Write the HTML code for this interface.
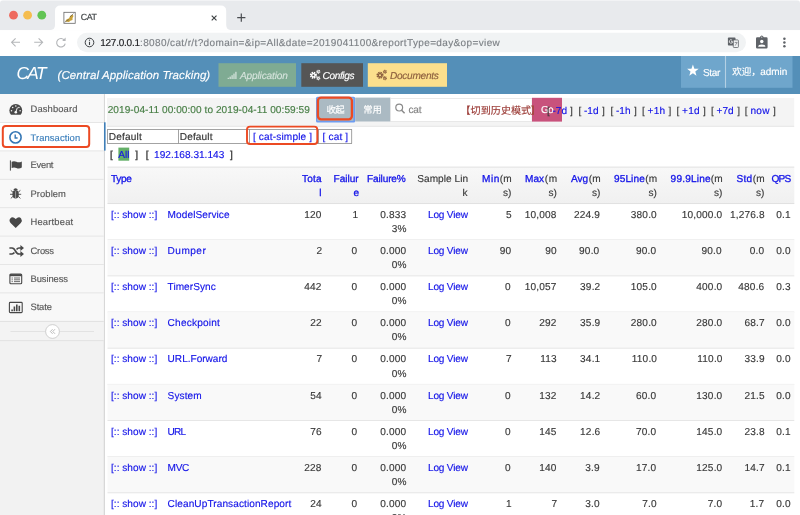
<!DOCTYPE html>
<html lang="zh">
<head>
<meta charset="utf-8">
<title>CAT</title>
<style>
html,body{margin:0;padding:0;background:#fff;}
body{width:800px;height:515px;overflow:hidden;position:relative;font-family:"Liberation Sans","Noto Sans CJK SC",sans-serif;}
#root{position:absolute;left:0;top:0;width:800px;height:515px;overflow:hidden;will-change:transform;}
#root div{position:absolute;box-sizing:border-box;}
#root svg{position:absolute;overflow:visible;}
#root span,#root a{position:absolute;white-space:pre;line-height:1;text-decoration:none;-webkit-text-stroke:0.15px currentColor;text-rendering:geometricPrecision;}
</style>
</head>
<body>
<div id="root">
<svg width="800" height="515" viewBox="0 0 800 515" style="left:0;top:0">
<rect x="0" y="0" width="800" height="30.2" fill="#e8eaed"/>
<rect x="0" y="0" width="800" height="0.9" fill="#f3f4f6"/>
<path d="M0 0 H3.5 A3.5 3.5 0 0 0 0 3.5 Z" fill="#fff"/>
<path d="M800 0 H796.5 A3.5 3.5 0 0 1 800 3.5 Z" fill="#fff"/>
<circle cx="13.5" cy="15.2" r="4.4" fill="#ee6a5f"/>
<circle cx="27.6" cy="15.2" r="4.4" fill="#f5bd4f"/>
<circle cx="41.8" cy="15.2" r="4.4" fill="#61c454"/>
<path d="M49.5 30.2 Q55 30.2 55 25 V11 Q55 5.5 60.5 5.5 H220.7 Q226.2 5.5 226.2 11 V25 Q226.2 30.2 231.7 30.2 Z" fill="#fff"/>
<rect x="0" y="30.2" width="800" height="25.8" fill="#fff"/>
<rect x="63.9" y="12.3" width="11.3" height="11" fill="#fff" stroke="#666" stroke-width="0.8"/>
<path d="M65 21.5 Q67 18 69 18.5 Q70 15 72.5 14.5 L73.5 16 Q72 18 72.5 20 Q70 20.5 69 22 Z" fill="#c9a23a"/>
<path d="M64.5 22.3 L69 19.5 M70 17 L73.5 13.5" stroke="#555" stroke-width="0.6" fill="none"/>
<path d="M211.7 15.6 L216.5 20.4 M216.5 15.6 L211.7 20.4" stroke="#3c4043" stroke-width="1.15" fill="none"/>
<path d="M237.2 17.6 H245.4 M241.3 13.5 V21.7" stroke="#4a4d51" stroke-width="1.2" fill="none"/>
<path d="M20 42.3 H11.6 M15.6 38.3 L11.6 42.3 L15.6 46.3" stroke="#b4b6b9" stroke-width="1.1" fill="none"/>
<path d="M34.2 42.3 H42.6 M38.6 38.3 L42.6 42.3 L38.6 46.3" stroke="#b4b6b9" stroke-width="1.1" fill="none"/>
<path d="M64.6 40.4 A4.3 4.3 0 1 0 65.2 43.6" stroke="#b4b6b9" stroke-width="1.1" fill="none"/>
<path d="M65.6 37.6 V41 H62.2 Z" fill="#b4b6b9"/>
<rect x="77" y="32.8" width="669" height="19.4" fill="#f1f3f4" rx="9.7"/>
<circle cx="89.5" cy="42.5" r="4.3" fill="none" stroke="#3c4043" stroke-width="1"/>
<path d="M89.5 41.8 V45" stroke="#3c4043" stroke-width="1.1" fill="none"/>
<circle cx="89.5" cy="40.2" r="0.65" fill="#3c4043"/>
<rect x="727.9" y="37.6" width="7.6" height="8" rx="0.8" fill="#5f6368"/>
<rect x="733.3" y="39.9" width="5.1" height="7.6" rx="0.8" fill="#f1f3f4" stroke="#5f6368" stroke-width="0.8"/>
<path d="M734.6 42.6 H737.4 M736 41.8 V42.6 M734.8 45.6 Q736.4 44.8 737 42.6" stroke="#5f6368" stroke-width="0.6" fill="none"/>
<path d="M732.6 41.6 H731 M732.7 41.6 A1.7 1.7 0 1 1 732.1 40.2" stroke="#fff" stroke-width="0.75" fill="none"/>
<path d="M757.2 37.2 H760 A1.9 1.9 0 0 1 763.6 37.2 H766.4 Q767.6 37.2 767.6 38.4 V47.3 Q767.6 48.5 766.4 48.5 H757.2 Q756 48.5 756 47.3 V38.4 Q756 37.2 757.2 37.2 Z" fill="#5f6368"/>
<circle cx="761.8" cy="41.5" r="1.7" fill="#fff"/>
<path d="M758.2 46.8 Q758.2 44.4 761.8 44.4 Q765.4 44.4 765.4 46.8 Z" fill="#fff"/>
<path d="M759.7 37.6 L761.8 35.2 L763.9 37.6 Z" fill="#5f6368"/>
<circle cx="761.8" cy="37.1" r="0.6" fill="#fff"/>
<circle cx="784.4" cy="38.8" r="1.25" fill="#5f6368"/>
<circle cx="784.4" cy="42.55" r="1.25" fill="#5f6368"/>
<circle cx="784.4" cy="46.3" r="1.25" fill="#5f6368"/>
</svg>
<span style="left:80.7px;top:13px;font-size:8.9px;color:#3c4043;letter-spacing:-0.4px;">CAT</span>
<span style="left:100.2px;top:39px;font-size:10px;color:#202124;letter-spacing:-0.237px;">127.0.0.1</span>
<span style="left:140.0px;top:39px;font-size:10px;color:#7d8186;letter-spacing:0.371px;">:8080/cat/r/t?domain=&amp;ip=All&amp;date=2019041100&amp;reportType=day&amp;op=view</span>
<svg width="800" height="515" viewBox="0 0 800 515" style="left:0;top:0">
<rect x="0" y="56" width="800" height="38" fill="#548fb8"/>
</svg>
<span style="left:16.4px;top:65px;font-size:17.3px;color:#fff;letter-spacing:-1.5px;font-style:italic;-webkit-text-stroke:0;">CAT</span>
<span style="left:57.5px;top:71px;font-size:11.5px;color:#fff;letter-spacing:0.086px;font-style:italic;">(Central Application Tracking)</span>
<svg width="800" height="515" viewBox="0 0 800 515" style="left:0;top:0">
<rect x="218.5" y="63.2" width="77.5" height="23.6" fill="#7fab93"/>
<rect x="301.3" y="63.2" width="61.7" height="23.6" fill="#555555"/>
<rect x="367.8" y="63.2" width="79.2" height="23.6" fill="#fbdf8d"/>
<rect x="227.6" y="77.8" width="1.4" height="1.2" fill="#fff" opacity="0.6"/>
<rect x="229.5" y="76.6" width="1.4" height="2.4" fill="#fff" opacity="0.6"/>
<rect x="231.4" y="75.2" width="1.4" height="3.8" fill="#fff" opacity="0.6"/>
<rect x="233.3" y="73.6" width="1.4" height="5.4" fill="#fff" opacity="0.6"/>
<rect x="235.2" y="71.8" width="1.4" height="7.2" fill="#fff" opacity="0.6"/>
</svg>
<span style="left:240.0px;top:72px;font-size:10.1px;color:rgba(255,255,255,0.62);letter-spacing:-0.15px;font-style:italic;">Application</span>
<svg width="800" height="515" viewBox="0 0 800 515" style="left:0;top:0">
<circle cx="313.4" cy="75.19999999999999" r="2.6" fill="none" stroke="#fff" stroke-width="1.9" stroke-dasharray="1.35 0.7"/>
<circle cx="313.4" cy="75.19999999999999" r="2.2" fill="#fff"/>
<circle cx="313.4" cy="75.19999999999999" r="1" fill="#555555"/>
<circle cx="318.3" cy="71.69999999999999" r="1.5" fill="none" stroke="#fff" stroke-width="1.1" stroke-dasharray="0.9 0.5"/>
<circle cx="318.3" cy="71.69999999999999" r="1.2" fill="#fff"/>
<circle cx="318.3" cy="71.69999999999999" r="0.5" fill="#555555"/>
<circle cx="318.3" cy="78.19999999999999" r="1.5" fill="none" stroke="#fff" stroke-width="1.1" stroke-dasharray="0.9 0.5"/>
<circle cx="318.3" cy="78.19999999999999" r="1.2" fill="#fff"/>
<circle cx="318.3" cy="78.19999999999999" r="0.5" fill="#555555"/>
</svg>
<span style="left:322.5px;top:72px;font-size:10.1px;color:#fff;letter-spacing:-0.367px;font-style:italic;">Configs</span>
<svg width="800" height="515" viewBox="0 0 800 515" style="left:0;top:0">
<circle cx="380.0" cy="75.19999999999999" r="2.6" fill="none" stroke="#8c5f3e" stroke-width="1.9" stroke-dasharray="1.35 0.7"/>
<circle cx="380.0" cy="75.19999999999999" r="2.2" fill="#8c5f3e"/>
<circle cx="380.0" cy="75.19999999999999" r="1" fill="#fbdf8d"/>
<circle cx="384.90000000000003" cy="71.69999999999999" r="1.5" fill="none" stroke="#8c5f3e" stroke-width="1.1" stroke-dasharray="0.9 0.5"/>
<circle cx="384.90000000000003" cy="71.69999999999999" r="1.2" fill="#8c5f3e"/>
<circle cx="384.90000000000003" cy="71.69999999999999" r="0.5" fill="#fbdf8d"/>
<circle cx="384.90000000000003" cy="78.19999999999999" r="1.5" fill="none" stroke="#8c5f3e" stroke-width="1.1" stroke-dasharray="0.9 0.5"/>
<circle cx="384.90000000000003" cy="78.19999999999999" r="1.2" fill="#8c5f3e"/>
<circle cx="384.90000000000003" cy="78.19999999999999" r="0.5" fill="#fbdf8d"/>
</svg>
<span style="left:390.0px;top:72px;font-size:10.1px;color:#8c5f3e;letter-spacing:-0.275px;font-style:italic;">Documents</span>
<svg width="800" height="515" viewBox="0 0 800 515" style="left:0;top:0">
<rect x="681" y="56" width="111.5" height="31.8" fill="#6fa6cc"/>
<rect x="724.95" y="56" width="1.1" height="31.8" fill="#b4d0e4"/>
<path d="M692.90 64.60 L694.37 68.68 L698.70 68.81 L695.28 71.47 L696.49 75.64 L692.90 73.20 L689.31 75.64 L690.52 71.47 L687.10 68.81 L691.43 68.68 Z" fill="#fff"/>
</svg>
<span style="left:703.0px;top:69px;font-size:10px;color:#fff;letter-spacing:-0.333px;">Star</span>
<span style="left:732.2px;top:68px;font-size:9.6px;color:#fff;">欢迎，</span>
<span style="left:760.3px;top:68px;font-size:10px;color:#fff;letter-spacing:-0.075px;">admin</span>
<svg width="800" height="515" viewBox="0 0 800 515" style="left:0;top:0">
<rect x="0" y="94" width="104" height="421" fill="#f2f2f2"/>
<rect x="103.8" y="94" width="1.0" height="421" fill="#cfcfcf"/>
<rect x="0" y="94.0" width="103.8" height="28.5" fill="#f8f8f8"/>
<rect x="0" y="122.4" width="103.8" height="28.5" fill="#ffffff"/>
<rect x="0" y="150.8" width="103.8" height="28.5" fill="#f8f8f8"/>
<rect x="0" y="179.2" width="103.8" height="28.5" fill="#f8f8f8"/>
<rect x="0" y="207.6" width="103.8" height="28.5" fill="#f8f8f8"/>
<rect x="0" y="236.0" width="103.8" height="28.5" fill="#f8f8f8"/>
<rect x="0" y="264.4" width="103.8" height="28.5" fill="#f8f8f8"/>
<rect x="0" y="292.8" width="103.8" height="28.5" fill="#f8f8f8"/>
<rect x="0" y="122.05" width="103.8" height="0.9" fill="#e4e4e4"/>
<rect x="0" y="150.45" width="103.8" height="0.9" fill="#e4e4e4"/>
<rect x="0" y="178.85" width="103.8" height="0.9" fill="#e4e4e4"/>
<rect x="0" y="207.25" width="103.8" height="0.9" fill="#e4e4e4"/>
<rect x="0" y="235.65" width="103.8" height="0.9" fill="#e4e4e4"/>
<rect x="0" y="264.05" width="103.8" height="0.9" fill="#e4e4e4"/>
<rect x="0" y="292.45" width="103.8" height="0.9" fill="#e4e4e4"/>
<rect x="0" y="320.85" width="103.8" height="0.9" fill="#e4e4e4"/>
<rect x="104" y="122.3" width="1.6" height="28.3" fill="#3f7fb8"/>
</svg>
<span style="left:30.5px;top:104px;font-size:9.4px;color:#585858;letter-spacing:0.125px;">Dashboard</span>
<span style="left:30.5px;top:133px;font-size:9.4px;color:#3b7fbc;letter-spacing:0.1px;">Transaction</span>
<span style="left:30.5px;top:160px;font-size:9.4px;color:#585858;letter-spacing:-0.25px;">Event</span>
<span style="left:30.5px;top:189px;font-size:9.4px;color:#585858;letter-spacing:0.083px;">Problem</span>
<span style="left:30.5px;top:217px;font-size:9.4px;color:#585858;letter-spacing:0.188px;">Heartbeat</span>
<span style="left:30.5px;top:246px;font-size:9.4px;color:#585858;letter-spacing:-0.25px;">Cross</span>
<span style="left:30.5px;top:274px;font-size:9.4px;color:#585858;letter-spacing:-0.071px;">Business</span>
<span style="left:30.5px;top:302px;font-size:9.4px;color:#585858;letter-spacing:-0.125px;">State</span>
<svg width="800" height="515" viewBox="0 0 800 515" style="left:0;top:0">
<rect x="0" y="321.2" width="103.8" height="19.5" fill="#f3f3f3"/>
<rect x="0" y="340.25" width="103.8" height="0.9" fill="#e0e0e0"/>
<rect x="0" y="321.05" width="103.8" height="0.9" fill="#e0e0e0"/>
<rect x="10.5" y="331.05" width="83.5" height="0.9" fill="#e0e0e0"/>
<circle cx="52.5" cy="331.5" r="6.9" fill="#fff" stroke="#c4c4c4" stroke-width="0.8"/>
<path d="M52.6 329.2 L50.4 331.5 L52.6 333.8 M55 329.2 L52.8 331.5 L55 333.8" stroke="#aaa" stroke-width="0.8" fill="none"/>
<path d="M11 114.7 A6.4 6.4 0 1 1 20.6 114.7 Z" fill="#484848"/>
<path d="M15.8 112 L17.4 107.6" stroke="#f8f8f8" stroke-width="1" fill="none"/>
<circle cx="11.5" cy="110.8" r="0.75" fill="#f8f8f8"/>
<circle cx="12.700000000000001" cy="107.5" r="0.75" fill="#f8f8f8"/>
<circle cx="15.8" cy="106.1" r="0.75" fill="#f8f8f8"/>
<circle cx="18.900000000000002" cy="107.5" r="0.75" fill="#f8f8f8"/>
<circle cx="20.1" cy="110.8" r="0.75" fill="#f8f8f8"/>
<circle cx="15.8" cy="112.2" r="1.3" fill="#f8f8f8"/>
<circle cx="15.5" cy="137.4" r="5.6" fill="none" stroke="#3577b5" stroke-width="1.6"/>
<path d="M15.2 134.4 V138 H17.6" stroke="#3577b5" stroke-width="1.4" fill="none"/>
<path d="M10.4 160.4 V170.6" stroke="#484848" stroke-width="1" fill="none"/>
<path d="M11.6 161.8 Q14 160.6 16.4 161.8 Q19 163 21.8 161.4 V167.6 Q19 169.2 16.4 168 Q14 166.8 11.6 168 Z" fill="#484848"/>
<ellipse cx="15.6" cy="194.2" rx="3.2" ry="4.3" fill="#484848"/>
<path d="M13.4 190 A2.3 2.3 0 0 1 17.8 190 Z" fill="#484848"/>
<path d="M10 194.3 H21.2 M10.8 190.4 L13 192.2 M20.4 190.4 L18.2 192.2 M10.8 198.4 L13 196.4 M20.4 198.4 L18.2 196.4" stroke="#484848" stroke-width="0.9" fill="none"/>
<path d="M15.6 191.2 V198" stroke="#bdbdbd" stroke-width="0.7" fill="none"/>
<path d="M15.7 228 L10.6 222.9 Q8.6 220.6 10.3 218.4 Q12.6 216 15.7 219 Q18.8 216 21.1 218.4 Q22.8 220.6 20.8 222.9 Z" fill="#484848"/>
<path d="M9.4 248 H12 Q14 248 15.4 251 Q17 254 19 254 H21 M9.4 254 H12 Q13.4 254 14.4 252.6 M16.6 249.4 Q17.6 248 19 248 H21" stroke="#484848" stroke-width="1.7" fill="none"/>
<path d="M20.4 245.1 L24 248 L20.4 250.9 Z M20.4 251.1 L24 254 L20.4 256.9 Z" fill="#484848"/>
<rect x="9.9" y="274.1" width="11.8" height="9.6" rx="1" fill="none" stroke="#484848" stroke-width="1.1"/>
<path d="M9.9 275.2 H21.7" stroke="#484848" stroke-width="2" fill="none"/>
<path d="M11.6 278 H12.8 M14 278 H20 M11.6 279.8 H12.8 M14 279.8 H20 M11.6 281.6 H12.8 M14 281.6 H20" stroke="#484848" stroke-width="0.8" fill="none"/>
<rect x="9.4" y="302.4" width="12.8" height="10.2" rx="0.9" fill="none" stroke="#484848" stroke-width="1.1"/>
<path d="M12.1 311.2 V309.4 M14.4 311.2 V306.6 M16.8 311.2 V304.6 M19.3 311.2 V305.8" stroke="#484848" stroke-width="1.6" fill="none"/>
<rect x="107" y="98" width="687.2" height="28.1" fill="#f4f4f4"/>
<rect x="107" y="125.85" width="687.2" height="0.9" fill="#e3e3e3"/>
</svg>
<span style="left:107.7px;top:106px;font-size:10.08px;color:#487f46;letter-spacing:0.061px;">2019-04-11 00:00:00 to 2019-04-11 00:59:59</span>
<svg width="800" height="515" viewBox="0 0 800 515" style="left:0;top:0">
<rect x="316" y="96.8" width="39.2" height="25.8" fill="#6d9cf0" rx="1.5"/>
<rect x="317.4" y="97.8" width="36.0" height="23.0" fill="#abbac3"/>
<rect x="355.2" y="97.6" width="35.3" height="23.9" fill="#abbac3"/>
</svg>
<span style="left:326.6px;top:105px;font-size:9.4px;color:#fff;letter-spacing:-0.6px;">收起</span>
<span style="left:363.2px;top:105px;font-size:9.4px;color:#fff;">常用</span>
<svg width="800" height="515" viewBox="0 0 800 515" style="left:0;top:0">
<rect x="390.5" y="98.4" width="141.5" height="23.0" fill="#fff" stroke="#e2e2e2" stroke-width="0.7"/>
<circle cx="399.2" cy="107.6" r="3.4" fill="none" stroke="#8a8a8a" stroke-width="1.2"/>
<path d="M401.6 110.2 L404.6 113.3" stroke="#8a8a8a" stroke-width="1.4" fill="none"/>
</svg>
<span style="left:408.6px;top:106px;font-size:10.08px;color:#858585;letter-spacing:-0.3px;">cat</span>
<svg width="800" height="515" viewBox="0 0 800 515" style="left:0;top:0">
<rect x="532" y="97.8" width="30" height="23.8" fill="#c8527c"/>
</svg>
<span style="left:460.5px;top:107px;font-size:10.08px;color:#9b3a35;letter-spacing:0.017px;">【切到历史模式</span>
<span style="left:530.4px;top:107px;font-size:10.08px;color:#a4483f;">】</span>
<span style="left:541.0px;top:106px;font-size:10.08px;color:#fff;letter-spacing:-0.8px;">Go</span>
<span style="left:547.0px;top:107px;font-size:10.08px;color:#3a3a3a;">[</span>
<span style="left:552.5px;top:107px;font-size:10.08px;color:#1414e8;">-7d</span>
<span style="left:570.0px;top:107px;font-size:10.08px;color:#3a3a3a;">]</span>
<span style="left:578.6px;top:107px;font-size:10.08px;color:#3a3a3a;">[</span>
<span style="left:584.0px;top:107px;font-size:10.08px;color:#1414e8;">-1d</span>
<span style="left:602.0px;top:107px;font-size:10.08px;color:#3a3a3a;">]</span>
<span style="left:610.6px;top:107px;font-size:10.08px;color:#3a3a3a;">[</span>
<span style="left:616.0px;top:107px;font-size:10.08px;color:#1414e8;">-1h</span>
<span style="left:634.0px;top:107px;font-size:10.08px;color:#3a3a3a;">]</span>
<span style="left:642.0px;top:107px;font-size:10.08px;color:#3a3a3a;">[</span>
<span style="left:647.6px;top:107px;font-size:10.08px;color:#1414e8;letter-spacing:0.2px;">+1h</span>
<span style="left:668.5px;top:107px;font-size:10.08px;color:#3a3a3a;">]</span>
<span style="left:676.6px;top:107px;font-size:10.08px;color:#3a3a3a;">[</span>
<span style="left:682.0px;top:107px;font-size:10.08px;color:#1414e8;letter-spacing:0.3px;">+1d</span>
<span style="left:703.0px;top:107px;font-size:10.08px;color:#3a3a3a;">]</span>
<span style="left:711.0px;top:107px;font-size:10.08px;color:#3a3a3a;">[</span>
<span style="left:716.6px;top:107px;font-size:10.08px;color:#1414e8;letter-spacing:-0.1px;">+7d</span>
<span style="left:737.3px;top:107px;font-size:10.08px;color:#3a3a3a;">]</span>
<span style="left:744.8px;top:107px;font-size:10.08px;color:#3a3a3a;">[</span>
<span style="left:750.5px;top:107px;font-size:10.08px;color:#1414e8;letter-spacing:0.25px;">now</span>
<span style="left:773.0px;top:107px;font-size:10.08px;color:#3a3a3a;">]</span>
<svg width="800" height="515" viewBox="0 0 800 515" style="left:0;top:0">
<rect x="107.5" y="129.4" width="244.3" height="14.0" fill="#fff"/>
<rect x="107.2" y="129.0" width="244.8" height="0.8" fill="#8c8c8c"/>
<rect x="107.2" y="143.0" width="244.8" height="0.8" fill="#8c8c8c"/>
<rect x="107.1" y="129.4" width="0.8" height="14.0" fill="#8c8c8c"/>
<rect x="178.1" y="129.4" width="0.8" height="14.0" fill="#8c8c8c"/>
<rect x="249.0" y="129.4" width="0.8" height="14.0" fill="#8c8c8c"/>
<rect x="318.2" y="129.4" width="0.8" height="14.0" fill="#8c8c8c"/>
<rect x="351.3" y="129.4" width="0.8" height="14.0" fill="#8c8c8c"/>
</svg>
<span style="left:108.8px;top:133px;font-size:10.08px;color:#333;letter-spacing:0.167px;">Default</span>
<span style="left:179.8px;top:133px;font-size:10.08px;color:#333;letter-spacing:0.117px;">Default</span>
<span style="left:252.9px;top:133px;font-size:10.08px;color:#1414e8;letter-spacing:0.162px;">[ cat-simple ]</span>
<span style="left:322.6px;top:133px;font-size:10.08px;color:#1414e8;letter-spacing:0.15px;">[ cat ]</span>
<span style="left:109.9px;top:151px;font-size:10.08px;color:#333;-webkit-text-stroke:0.3px currentColor;">[</span>
<svg width="800" height="515" viewBox="0 0 800 515" style="left:0;top:0">
<rect x="118.4" y="147.6" width="10.8" height="13.1" fill="#64b068"/>
</svg>
<span style="left:118.2px;top:151px;font-size:10.08px;color:#1414e8;">All</span>
<span style="left:135.2px;top:151px;font-size:10.08px;color:#333;-webkit-text-stroke:0.3px currentColor;">]</span>
<span style="left:145.8px;top:151px;font-size:10.08px;color:#333;-webkit-text-stroke:0.3px currentColor;">[</span>
<span style="left:154.1px;top:151px;font-size:10.08px;color:#1414e8;letter-spacing:0.008px;">192.168.31.143</span>
<span style="left:230.0px;top:151px;font-size:10.08px;color:#333;-webkit-text-stroke:0.3px currentColor;">]</span>
<svg width="800" height="515" viewBox="0 0 800 515" style="left:0;top:0">
<defs><linearGradient id="hg" x1="0" y1="0" x2="0" y2="1"><stop offset="0" stop-color="#f8f8f8"/><stop offset="1" stop-color="#f0f0f0"/></linearGradient></defs>
<rect x="107.5" y="167.1" width="686.8" height="36.5" fill="url(#hg)"/>
<rect x="107.5" y="166.65" width="686.8" height="0.9" fill="#dedede"/>
<rect x="107.5" y="203.15" width="686.8" height="0.9" fill="#dedede"/>
<rect x="107.5" y="239.3" width="686.8" height="0.9" fill="#e4e4e4"/>
<rect x="107.5" y="239.75" width="686.8" height="36.15" fill="#f9f9f9"/>
<rect x="107.5" y="275.45" width="686.8" height="0.9" fill="#e4e4e4"/>
<rect x="107.5" y="311.6" width="686.8" height="0.9" fill="#e4e4e4"/>
<rect x="107.5" y="312.05" width="686.8" height="36.15" fill="#f9f9f9"/>
<rect x="107.5" y="347.75" width="686.8" height="0.9" fill="#e4e4e4"/>
<rect x="107.5" y="383.9" width="686.8" height="0.9" fill="#e4e4e4"/>
<rect x="107.5" y="384.35" width="686.8" height="36.15" fill="#f9f9f9"/>
<rect x="107.5" y="420.05" width="686.8" height="0.9" fill="#e4e4e4"/>
<rect x="107.5" y="456.2" width="686.8" height="0.9" fill="#e4e4e4"/>
<rect x="107.5" y="456.65" width="686.8" height="36.15" fill="#f9f9f9"/>
<rect x="107.5" y="492.35" width="686.8" height="0.9" fill="#e4e4e4"/>
<rect x="107.5" y="528.5" width="686.8" height="0.9" fill="#e4e4e4"/>
</svg>
<span style="left:111.0px;top:175px;font-size:10.08px;color:#1414e8;letter-spacing:-0.333px;-webkit-text-stroke:0.3px currentColor;">Type</span>
<span style="left:302.0px;top:175px;font-size:10.08px;color:#1414e8;letter-spacing:0.167px;-webkit-text-stroke:0.3px currentColor;">Tota</span>
<span style="left:319.2px;top:189px;font-size:10.08px;color:#1414e8;-webkit-text-stroke:0.3px currentColor;">l</span>
<span style="left:333.5px;top:175px;font-size:10.08px;color:#1414e8;-webkit-text-stroke:0.3px currentColor;">Failur</span>
<span style="left:353.5px;top:189px;font-size:10.08px;color:#1414e8;-webkit-text-stroke:0.3px currentColor;">e</span>
<span style="left:367.0px;top:175px;font-size:10.08px;color:#1414e8;letter-spacing:-0.143px;-webkit-text-stroke:0.3px currentColor;">Failure%</span>
<span style="left:417.3px;top:175px;font-size:10.08px;color:#3a3a3a;letter-spacing:0.033px;">Sample Lin</span>
<span style="left:462.6px;top:189px;font-size:10.08px;color:#3a3a3a;">k</span>
<span style="left:482.0px;top:175px;font-size:10.08px;color:#1414e8;letter-spacing:0.5px;-webkit-text-stroke:0.3px currentColor;">Min</span>
<span style="left:499.8px;top:175px;font-size:10.08px;color:#3a3a3a;letter-spacing:0.2px;">(m</span>
<span style="left:503.0px;top:189px;font-size:10.08px;color:#3a3a3a;">s)</span>
<span style="left:525.0px;top:175px;font-size:10.08px;color:#1414e8;-webkit-text-stroke:0.3px currentColor;">Max</span>
<span style="left:544.8px;top:175px;font-size:10.08px;color:#3a3a3a;letter-spacing:0.7px;">(m</span>
<span style="left:548.5px;top:189px;font-size:10.08px;color:#3a3a3a;">s)</span>
<span style="left:571.0px;top:175px;font-size:10.08px;color:#1414e8;-webkit-text-stroke:0.3px currentColor;">Avg</span>
<span style="left:588.8px;top:175px;font-size:10.08px;color:#3a3a3a;letter-spacing:0.2px;">(m</span>
<span style="left:592.0px;top:189px;font-size:10.08px;color:#3a3a3a;">s)</span>
<span style="left:614.0px;top:175px;font-size:10.08px;color:#1414e8;letter-spacing:0.1px;-webkit-text-stroke:0.3px currentColor;">95Line</span>
<span style="left:645.3px;top:175px;font-size:10.08px;color:#3a3a3a;letter-spacing:0.2px;">(m</span>
<span style="left:648.5px;top:189px;font-size:10.08px;color:#3a3a3a;">s)</span>
<span style="left:670.6px;top:175px;font-size:10.08px;color:#1414e8;letter-spacing:0.2px;-webkit-text-stroke:0.3px currentColor;">99.9Line</span>
<span style="left:710.8px;top:175px;font-size:10.08px;color:#3a3a3a;letter-spacing:0.2px;">(m</span>
<span style="left:714.0px;top:189px;font-size:10.08px;color:#3a3a3a;">s)</span>
<span style="left:736.6px;top:175px;font-size:10.08px;color:#1414e8;letter-spacing:0.2px;-webkit-text-stroke:0.3px currentColor;">Std</span>
<span style="left:752.8px;top:175px;font-size:10.08px;color:#3a3a3a;letter-spacing:0.2px;">(m</span>
<span style="left:756.0px;top:189px;font-size:10.08px;color:#3a3a3a;">s)</span>
<span style="left:771.5px;top:175px;font-size:10.08px;color:#1414e8;letter-spacing:-0.75px;-webkit-text-stroke:0.3px currentColor;">QPS</span>
<span style="left:111.0px;top:211px;font-size:10.08px;color:#1414e8;letter-spacing:0.027px;">[:: show ::]</span>
<span style="left:167.6px;top:211px;font-size:10.08px;color:#1414e8;letter-spacing:0.082px;">ModelService</span>
<span style="left:304.16px;top:211px;font-size:10.08px;color:#393939;letter-spacing:0.17px;">120</span>
<span style="left:352.6px;top:211px;font-size:10.08px;color:#393939;letter-spacing:0.17px;">1</span>
<span style="left:380.32px;top:211px;font-size:10.08px;color:#393939;letter-spacing:0.17px;">0.833</span>
<span style="left:391.83px;top:225px;font-size:10.08px;color:#393939;letter-spacing:0.17px;">3%</span>
<span style="left:428.0px;top:211px;font-size:10.08px;color:#1414e8;letter-spacing:-0.186px;">Log View</span>
<span style="left:506.0px;top:211px;font-size:10.08px;color:#393939;letter-spacing:0.17px;">5</span>
<span style="left:524.65px;top:211px;font-size:10.08px;color:#393939;letter-spacing:0.17px;">10,008</span>
<span style="left:573.92px;top:211px;font-size:10.08px;color:#393939;letter-spacing:0.17px;">224.9</span>
<span style="left:630.82px;top:211px;font-size:10.08px;color:#393939;letter-spacing:0.17px;">380.0</span>
<span style="left:681.81px;top:211px;font-size:10.08px;color:#393939;letter-spacing:0.17px;">10,000.0</span>
<span style="left:729.98px;top:211px;font-size:10.08px;color:#393939;letter-spacing:0.17px;">1,276.8</span>
<span style="left:776.26px;top:211px;font-size:10.08px;color:#393939;letter-spacing:0.17px;">0.1</span>
<span style="left:111.0px;top:247px;font-size:10.08px;color:#1414e8;letter-spacing:0.027px;">[:: show ::]</span>
<span style="left:167.6px;top:247px;font-size:10.08px;color:#1414e8;letter-spacing:0.46px;">Dumper</span>
<span style="left:316.5px;top:247px;font-size:10.08px;color:#393939;letter-spacing:0.17px;">2</span>
<span style="left:351.6px;top:247px;font-size:10.08px;color:#393939;letter-spacing:0.17px;">0</span>
<span style="left:380.32px;top:247px;font-size:10.08px;color:#393939;letter-spacing:0.17px;">0.000</span>
<span style="left:391.83px;top:261px;font-size:10.08px;color:#393939;letter-spacing:0.17px;">0%</span>
<span style="left:428.0px;top:247px;font-size:10.08px;color:#1414e8;letter-spacing:-0.186px;">Log View</span>
<span style="left:499.83px;top:247px;font-size:10.08px;color:#393939;letter-spacing:0.17px;">90</span>
<span style="left:545.33px;top:247px;font-size:10.08px;color:#393939;letter-spacing:0.17px;">90</span>
<span style="left:579.09px;top:247px;font-size:10.08px;color:#393939;letter-spacing:0.17px;">90.0</span>
<span style="left:635.99px;top:247px;font-size:10.08px;color:#393939;letter-spacing:0.17px;">90.0</span>
<span style="left:701.49px;top:247px;font-size:10.08px;color:#393939;letter-spacing:0.17px;">90.0</span>
<span style="left:749.66px;top:247px;font-size:10.08px;color:#393939;letter-spacing:0.17px;">0.0</span>
<span style="left:776.26px;top:247px;font-size:10.08px;color:#393939;letter-spacing:0.17px;">0.0</span>
<span style="left:111.0px;top:283px;font-size:10.08px;color:#1414e8;letter-spacing:0.027px;">[:: show ::]</span>
<span style="left:167.6px;top:283px;font-size:10.08px;color:#1414e8;letter-spacing:0.038px;">TimerSync</span>
<span style="left:304.16px;top:283px;font-size:10.08px;color:#393939;letter-spacing:0.17px;">442</span>
<span style="left:351.6px;top:283px;font-size:10.08px;color:#393939;letter-spacing:0.17px;">0</span>
<span style="left:380.32px;top:283px;font-size:10.08px;color:#393939;letter-spacing:0.17px;">0.000</span>
<span style="left:391.83px;top:297px;font-size:10.08px;color:#393939;letter-spacing:0.17px;">0%</span>
<span style="left:428.0px;top:283px;font-size:10.08px;color:#1414e8;letter-spacing:-0.186px;">Log View</span>
<span style="left:505.0px;top:283px;font-size:10.08px;color:#393939;letter-spacing:0.17px;">0</span>
<span style="left:524.65px;top:283px;font-size:10.08px;color:#393939;letter-spacing:0.17px;">10,057</span>
<span style="left:580.09px;top:283px;font-size:10.08px;color:#393939;letter-spacing:0.17px;">39.2</span>
<span style="left:630.82px;top:283px;font-size:10.08px;color:#393939;letter-spacing:0.17px;">105.0</span>
<span style="left:696.32px;top:283px;font-size:10.08px;color:#393939;letter-spacing:0.17px;">400.0</span>
<span style="left:738.32px;top:283px;font-size:10.08px;color:#393939;letter-spacing:0.17px;">480.6</span>
<span style="left:776.26px;top:283px;font-size:10.08px;color:#393939;letter-spacing:0.17px;">0.3</span>
<span style="left:111.0px;top:319px;font-size:10.08px;color:#1414e8;letter-spacing:0.027px;">[:: show ::]</span>
<span style="left:167.6px;top:319px;font-size:10.08px;color:#1414e8;letter-spacing:0.2px;">Checkpoint</span>
<span style="left:310.33px;top:319px;font-size:10.08px;color:#393939;letter-spacing:0.17px;">22</span>
<span style="left:351.6px;top:319px;font-size:10.08px;color:#393939;letter-spacing:0.17px;">0</span>
<span style="left:380.32px;top:319px;font-size:10.08px;color:#393939;letter-spacing:0.17px;">0.000</span>
<span style="left:391.83px;top:333px;font-size:10.08px;color:#393939;letter-spacing:0.17px;">0%</span>
<span style="left:428.0px;top:319px;font-size:10.08px;color:#1414e8;letter-spacing:-0.186px;">Log View</span>
<span style="left:505.0px;top:319px;font-size:10.08px;color:#393939;letter-spacing:0.17px;">0</span>
<span style="left:539.16px;top:319px;font-size:10.08px;color:#393939;letter-spacing:0.17px;">292</span>
<span style="left:580.09px;top:319px;font-size:10.08px;color:#393939;letter-spacing:0.17px;">35.9</span>
<span style="left:630.82px;top:319px;font-size:10.08px;color:#393939;letter-spacing:0.17px;">280.0</span>
<span style="left:696.32px;top:319px;font-size:10.08px;color:#393939;letter-spacing:0.17px;">280.0</span>
<span style="left:744.49px;top:319px;font-size:10.08px;color:#393939;letter-spacing:0.17px;">68.7</span>
<span style="left:776.26px;top:319px;font-size:10.08px;color:#393939;letter-spacing:0.17px;">0.0</span>
<span style="left:111.0px;top:355px;font-size:10.08px;color:#1414e8;letter-spacing:0.027px;">[:: show ::]</span>
<span style="left:167.6px;top:355px;font-size:10.08px;color:#1414e8;letter-spacing:-0.01px;">URL.Forward</span>
<span style="left:316.5px;top:355px;font-size:10.08px;color:#393939;letter-spacing:0.17px;">7</span>
<span style="left:351.6px;top:355px;font-size:10.08px;color:#393939;letter-spacing:0.17px;">0</span>
<span style="left:380.32px;top:355px;font-size:10.08px;color:#393939;letter-spacing:0.17px;">0.000</span>
<span style="left:391.83px;top:370px;font-size:10.08px;color:#393939;letter-spacing:0.17px;">0%</span>
<span style="left:428.0px;top:355px;font-size:10.08px;color:#1414e8;letter-spacing:-0.186px;">Log View</span>
<span style="left:506.0px;top:355px;font-size:10.08px;color:#393939;letter-spacing:0.17px;">7</span>
<span style="left:540.16px;top:355px;font-size:10.08px;color:#393939;letter-spacing:0.17px;">113</span>
<span style="left:580.09px;top:355px;font-size:10.08px;color:#393939;letter-spacing:0.17px;">34.1</span>
<span style="left:631.82px;top:355px;font-size:10.08px;color:#393939;letter-spacing:0.17px;">110.0</span>
<span style="left:697.32px;top:355px;font-size:10.08px;color:#393939;letter-spacing:0.17px;">110.0</span>
<span style="left:744.49px;top:355px;font-size:10.08px;color:#393939;letter-spacing:0.17px;">33.9</span>
<span style="left:776.26px;top:355px;font-size:10.08px;color:#393939;letter-spacing:0.17px;">0.0</span>
<span style="left:111.0px;top:392px;font-size:10.08px;color:#1414e8;letter-spacing:0.027px;">[:: show ::]</span>
<span style="left:167.6px;top:392px;font-size:10.08px;color:#1414e8;letter-spacing:0.08px;">System</span>
<span style="left:310.33px;top:392px;font-size:10.08px;color:#393939;letter-spacing:0.17px;">54</span>
<span style="left:351.6px;top:392px;font-size:10.08px;color:#393939;letter-spacing:0.17px;">0</span>
<span style="left:380.32px;top:392px;font-size:10.08px;color:#393939;letter-spacing:0.17px;">0.000</span>
<span style="left:391.83px;top:406px;font-size:10.08px;color:#393939;letter-spacing:0.17px;">0%</span>
<span style="left:428.0px;top:392px;font-size:10.08px;color:#1414e8;letter-spacing:-0.186px;">Log View</span>
<span style="left:505.0px;top:392px;font-size:10.08px;color:#393939;letter-spacing:0.17px;">0</span>
<span style="left:539.16px;top:392px;font-size:10.08px;color:#393939;letter-spacing:0.17px;">132</span>
<span style="left:580.09px;top:392px;font-size:10.08px;color:#393939;letter-spacing:0.17px;">14.2</span>
<span style="left:635.99px;top:392px;font-size:10.08px;color:#393939;letter-spacing:0.17px;">60.0</span>
<span style="left:696.32px;top:392px;font-size:10.08px;color:#393939;letter-spacing:0.17px;">130.0</span>
<span style="left:744.49px;top:392px;font-size:10.08px;color:#393939;letter-spacing:0.17px;">21.5</span>
<span style="left:776.26px;top:392px;font-size:10.08px;color:#393939;letter-spacing:0.17px;">0.0</span>
<span style="left:111.0px;top:428px;font-size:10.08px;color:#1414e8;letter-spacing:0.027px;">[:: show ::]</span>
<span style="left:167.6px;top:428px;font-size:10.08px;color:#1414e8;letter-spacing:-0.8px;">URL</span>
<span style="left:310.33px;top:428px;font-size:10.08px;color:#393939;letter-spacing:0.17px;">76</span>
<span style="left:351.6px;top:428px;font-size:10.08px;color:#393939;letter-spacing:0.17px;">0</span>
<span style="left:380.32px;top:428px;font-size:10.08px;color:#393939;letter-spacing:0.17px;">0.000</span>
<span style="left:391.83px;top:442px;font-size:10.08px;color:#393939;letter-spacing:0.17px;">0%</span>
<span style="left:428.0px;top:428px;font-size:10.08px;color:#1414e8;letter-spacing:-0.186px;">Log View</span>
<span style="left:505.0px;top:428px;font-size:10.08px;color:#393939;letter-spacing:0.17px;">0</span>
<span style="left:539.16px;top:428px;font-size:10.08px;color:#393939;letter-spacing:0.17px;">145</span>
<span style="left:580.09px;top:428px;font-size:10.08px;color:#393939;letter-spacing:0.17px;">12.6</span>
<span style="left:635.99px;top:428px;font-size:10.08px;color:#393939;letter-spacing:0.17px;">70.0</span>
<span style="left:696.32px;top:428px;font-size:10.08px;color:#393939;letter-spacing:0.17px;">145.0</span>
<span style="left:744.49px;top:428px;font-size:10.08px;color:#393939;letter-spacing:0.17px;">23.8</span>
<span style="left:776.26px;top:428px;font-size:10.08px;color:#393939;letter-spacing:0.17px;">0.1</span>
<span style="left:111.0px;top:464px;font-size:10.08px;color:#1414e8;letter-spacing:0.027px;">[:: show ::]</span>
<span style="left:167.6px;top:464px;font-size:10.08px;color:#1414e8;letter-spacing:-0.3px;">MVC</span>
<span style="left:304.16px;top:464px;font-size:10.08px;color:#393939;letter-spacing:0.17px;">228</span>
<span style="left:351.6px;top:464px;font-size:10.08px;color:#393939;letter-spacing:0.17px;">0</span>
<span style="left:380.32px;top:464px;font-size:10.08px;color:#393939;letter-spacing:0.17px;">0.000</span>
<span style="left:391.83px;top:478px;font-size:10.08px;color:#393939;letter-spacing:0.17px;">0%</span>
<span style="left:428.0px;top:464px;font-size:10.08px;color:#1414e8;letter-spacing:-0.186px;">Log View</span>
<span style="left:505.0px;top:464px;font-size:10.08px;color:#393939;letter-spacing:0.17px;">0</span>
<span style="left:539.16px;top:464px;font-size:10.08px;color:#393939;letter-spacing:0.17px;">140</span>
<span style="left:585.26px;top:464px;font-size:10.08px;color:#393939;letter-spacing:0.17px;">3.9</span>
<span style="left:635.99px;top:464px;font-size:10.08px;color:#393939;letter-spacing:0.17px;">17.0</span>
<span style="left:696.32px;top:464px;font-size:10.08px;color:#393939;letter-spacing:0.17px;">125.0</span>
<span style="left:744.49px;top:464px;font-size:10.08px;color:#393939;letter-spacing:0.17px;">14.7</span>
<span style="left:776.26px;top:464px;font-size:10.08px;color:#393939;letter-spacing:0.17px;">0.1</span>
<span style="left:111.0px;top:500px;font-size:10.08px;color:#1414e8;letter-spacing:0.027px;">[:: show ::]</span>
<span style="left:167.6px;top:500px;font-size:10.08px;color:#1414e8;letter-spacing:0.083px;">CleanUpTransactionReport</span>
<span style="left:310.33px;top:500px;font-size:10.08px;color:#393939;letter-spacing:0.17px;">24</span>
<span style="left:351.6px;top:500px;font-size:10.08px;color:#393939;letter-spacing:0.17px;">0</span>
<span style="left:380.32px;top:500px;font-size:10.08px;color:#393939;letter-spacing:0.17px;">0.000</span>
<span style="left:391.83px;top:514px;font-size:10.08px;color:#393939;letter-spacing:0.17px;">0%</span>
<span style="left:428.0px;top:500px;font-size:10.08px;color:#1414e8;letter-spacing:-0.186px;">Log View</span>
<span style="left:506.0px;top:500px;font-size:10.08px;color:#393939;letter-spacing:0.17px;">1</span>
<span style="left:551.5px;top:500px;font-size:10.08px;color:#393939;letter-spacing:0.17px;">7</span>
<span style="left:585.26px;top:500px;font-size:10.08px;color:#393939;letter-spacing:0.17px;">3.0</span>
<span style="left:642.16px;top:500px;font-size:10.08px;color:#393939;letter-spacing:0.17px;">7.0</span>
<span style="left:707.66px;top:500px;font-size:10.08px;color:#393939;letter-spacing:0.17px;">7.0</span>
<span style="left:749.66px;top:500px;font-size:10.08px;color:#393939;letter-spacing:0.17px;">1.7</span>
<span style="left:776.26px;top:500px;font-size:10.08px;color:#393939;letter-spacing:0.17px;">0.0</span>
<svg width="800" height="515" viewBox="0 0 800 515" style="left:0;top:0">
<rect x="2.8" y="125.9" width="86.4" height="21.2" rx="3" fill="none" stroke="#ec4a23" stroke-width="2"/>
<rect x="317.9" y="97.6" width="34" height="21.7" rx="3.2" fill="none" stroke="#ec4a23" stroke-width="2.3"/>
<rect x="247" y="126.6" width="70.3" height="17.4" rx="3" fill="none" stroke="#ec4a23" stroke-width="1.9"/>
</svg>
</div>
</body>
</html>
